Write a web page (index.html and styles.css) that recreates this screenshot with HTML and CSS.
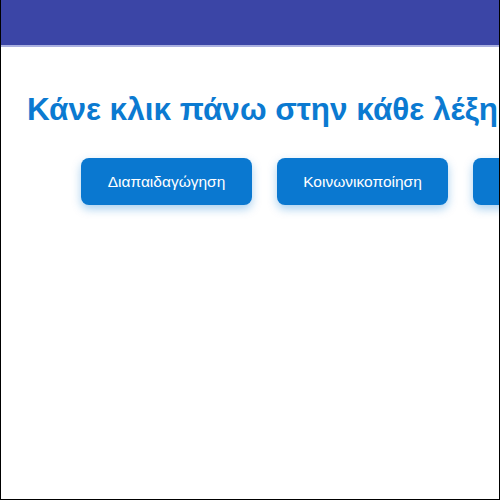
FILE: index.html
```html
<!DOCTYPE html>
<html>

<head>
  <title>Λέξεις</title>
  <link rel="stylesheet" href="styles.css">
</head>

<body>
  <main class="frame">
    <header class="top-bar">
      <div class="top-title">Ασκήσεις για τη σημασία των λέξεων στο μάθημα της γλώσσας</div>
    </header>
    <h1 class="page-title">Κάνε κλικ πάνω στην κάθε λέξη για να δεις τη σημασία της</h1>
    <div class="word-list">
      <button class="word-btn">Διαπαιδαγώγηση</button>
      <button class="word-btn">Κοινωνικοποίηση</button>
      <button class="word-btn">Αγωγή</button>
      <button class="word-btn">Εκπαίδευση</button>
    </div>
  </main>
</body>

</html>
```

FILE: styles.css
```css
html,
body {
  margin: 0;
  padding: 0;
  background-color: white;
}

body {
  font-family: "Liberation Sans", Arial, sans-serif;
}

.frame {
  box-sizing: border-box;
  width: 500px;
  height: 500px;
  border: 1px solid black;
  border-top: none;
  overflow: hidden;
  display: flex;
  flex-direction: column;
}

.top-bar {
  height: 45px;
  flex-shrink: 0;
  background-color: #3b45a6;
  border-bottom: 2px solid #aab0e0;
  overflow: hidden;
}

.top-title {
  margin-top: -27px;
  padding-left: 70px;
  font-size: 24px;
  line-height: 28px;
  color: white;
  white-space: nowrap;
}

.page-title {
  margin: 44px 0 0 0;
  padding-left: 26px;
  font-size: 31.5px;
  line-height: 36px;
  font-weight: bold;
  color: #0b7ad1;
  white-space: nowrap;
}

.word-list {
  display: flex;
  flex-direction: row;
  gap: 25px;
  padding-left: 80px;
  margin-top: 31px;
}

.word-btn {
  flex-shrink: 0;
  width: 171px;
  height: 47px;
  border: none;
  border-radius: 8px;
  background-color: #0a78d0;
  color: white;
  font-family: "Liberation Sans", Arial, sans-serif;
  font-size: 15.5px;
  box-shadow: 0 4px 10px rgba(10, 120, 208, 0.35);
  cursor: pointer;
}

.word-btn:hover {
  opacity: 0.9;
}
```
